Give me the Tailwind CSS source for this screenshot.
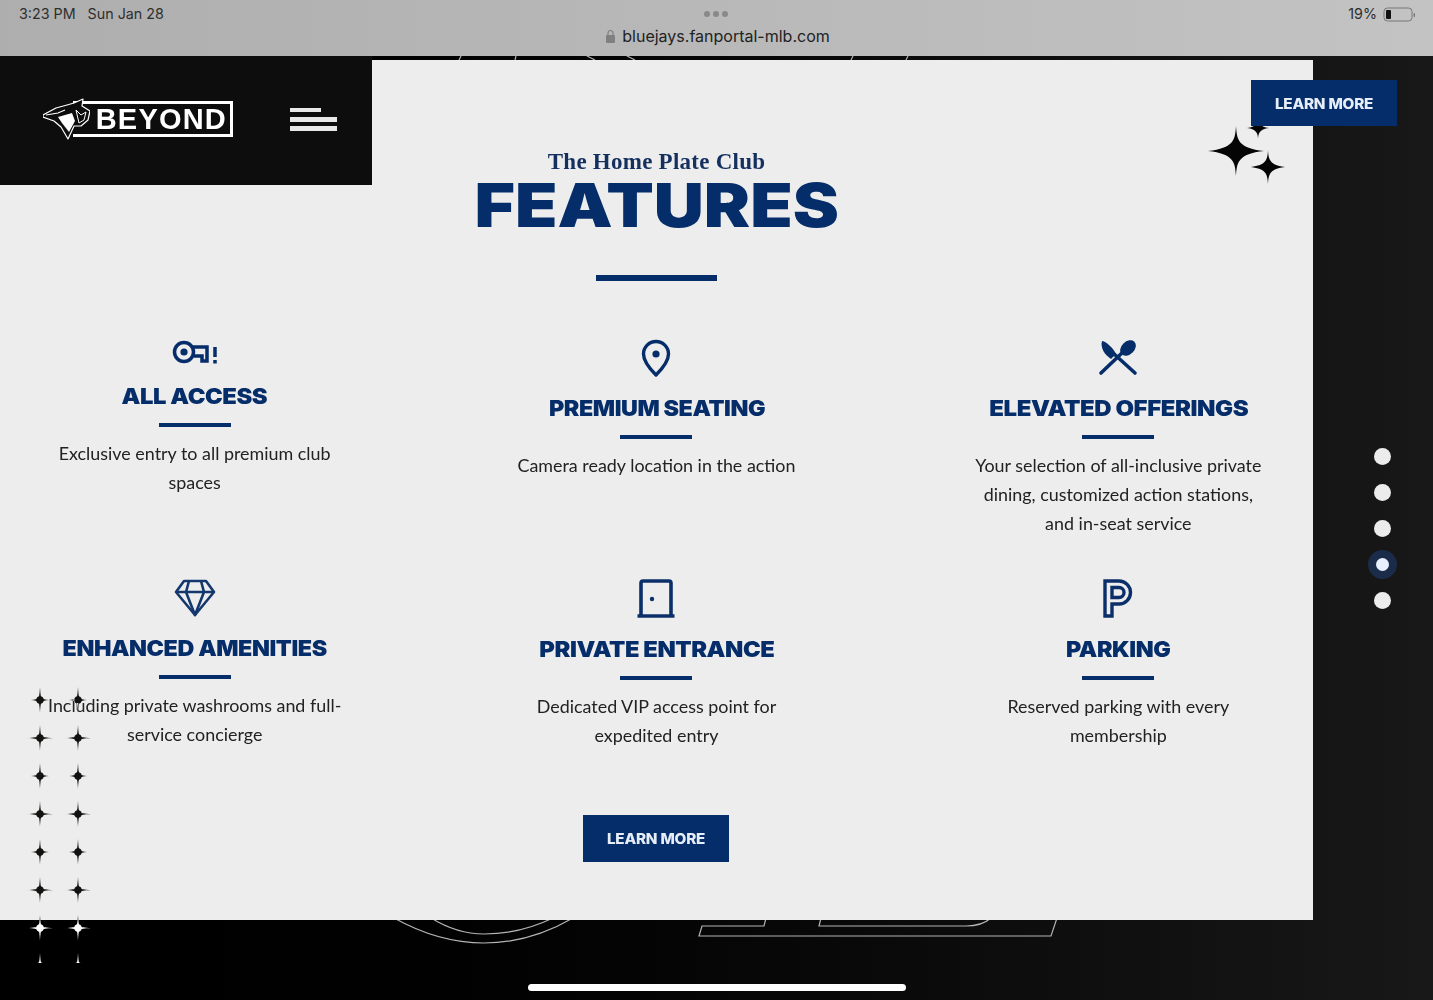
<!DOCTYPE html>
<html lang="en">
<head>
    <meta charset="UTF-8">
    <meta name="viewport" content="width=device-width, initial-scale=1.0">
    <title>The Home Plate Club Features</title>
    <script src="https://cdn.jsdelivr.net/npm/@tailwindcss/browser@4"></script>
</head>
<body class="bg-black">
    <div class="relative w-[1433px] h-[1000px] overflow-hidden bg-linear-to-r from-[#000000] via-[#060606] to-[#181818] font-['Inter',sans-serif]">

        <!-- Browser bar -->
        <header class="relative z-30 h-14 grid grid-cols-3 bg-linear-to-r from-[#aeaeae] to-[#c3c3c3] text-[#2e2e2e]">
            <div class="pl-[19px] pt-[5px] flex gap-[12px] text-[14.3px] leading-[18px] h-fit">
                <span>3:23 PM</span>
                <span>Sun Jan 28</span>
            </div>
            <div class="flex flex-col items-center pt-[11px]">
                <div class="flex gap-[3px] h-[6px]">
                    <span class="w-[6px] h-[6px] rounded-full bg-[#8a8a8a]"></span>
                    <span class="w-[6px] h-[6px] rounded-full bg-[#8a8a8a]"></span>
                    <span class="w-[6px] h-[6px] rounded-full bg-[#8a8a8a]"></span>
                </div>
                <div class="flex items-center gap-[7px] mt-[8px] ml-[3px] text-[16px] leading-[22px] text-[#222]">
                    <svg class="w-[9px] h-[14px]" viewBox="0 0 9 14"><path d="M2 6V4a2.500 2.500 0 0 1 5 0v2" fill="none" stroke="#808080" stroke-width="1.2"/><rect x="0" y="6" width="9" height="8" rx="1" fill="#808080"/></svg>
                    <span>bluejays.fanportal-mlb.com</span>
                </div>
            </div>
            <div class="flex justify-end gap-[6px] pr-[17px] pt-[5px] h-fit text-[14.3px] leading-[18px]">
                <span>19%</span>
                <svg class="w-[33px] h-[18px]" viewBox="0 0 33 18">
                    <rect x="1" y="3" width="28" height="13" rx="3.500" fill="none" stroke="#777" stroke-width="1"/>
                    <rect x="3" y="5" width="5" height="9" rx="1" fill="#111"/>
                    <rect x="30.500" y="8" width="1.500" height="4" rx="0.700" fill="#777"/>
                </svg>
            </div>
        </header>

        <!-- Outlined lettering behind the panel -->
        <svg class="absolute left-0 top-0 z-0" width="1433" height="1000" viewBox="0 0 1433 1000" fill="none" stroke="#b4b4b4" stroke-width="1.2">
            <path d="M394 918Q439 943 484 943Q530 943 573 918"/>
            <path d="M431 918Q457 934 484 934Q520 934 553 918"/>
            <path d="M766 918L764 926H702L699 936H1051L1057 918"/>
            <path d="M821 918L819 926H966Q982 926 991 918"/>
            <path d="M459 60L461 56M515 60L516 56M595 60L587 56M635 60L627 56M851 60L853 56M906 60L908 56"/>
        </svg>

        <main class="relative z-10 flex h-[944px]">
            <!-- Panel -->
            <section class="relative mt-1 w-[1313px] h-[860px] bg-[#ededee] flex flex-col items-center pt-[90px]">
                <p class="font-['Liberation_Serif',serif] font-bold text-[23px] leading-6 tracking-[0.25px] text-[#14305f]">The Home Plate Club</p>
                <h1 class="mt-[1px] h-[60px] font-black text-[60px] leading-[60px] text-[#052d69] scale-x-[1.156]">FEATURES</h1>
                <div class="mt-[40px] w-[121px] h-[6px] bg-[#052d69]"></div>

                <div class="mt-[58px] w-full grid grid-cols-3 gap-x-[72.5px] gap-y-[41px] h-[411px] grid-rows-[199px_171px]">
                    <!-- All access -->
                    <article class="flex flex-col items-center text-center">
                        <svg class="w-[48px] h-[26px]" viewBox="0 0 48 26" fill="none" stroke="#052d69" stroke-width="3.500">
                            <circle cx="13" cy="13" r="9.500"/>
                            <circle cx="13" cy="13" r="3.600" fill="#052d69" stroke="none"/>
                            <path d="M22 8H36V22H31V17H23"/>
                            <path d="M44 8V18M44 21V24.500"/>
                        </svg>
                        <h2 class="mt-[19px] h-6 font-black text-[22px] leading-6 tracking-[-0.4px] text-[#052d69] scale-x-[1.08] whitespace-nowrap">ALL ACCESS</h2>
                        <div class="mt-[15px] w-[72px] h-1 bg-[#052d69]"></div>
                        <p class="mt-3 w-[300px] font-['Lato',sans-serif] text-[17.9px] leading-[29px] text-[#222]">Exclusive entry to all premium club spaces</p>
                    </article>

                    <!-- Premium seating -->
                    <article class="flex flex-col items-center text-center">
                        <svg class="w-[30px] h-[38px]" viewBox="0 0 30 38" fill="none" stroke="#052d69" stroke-width="3.400">
                            <path d="M15 36C9 30 2.500 23 2.500 15A12.500 12.500 0 0 1 27.500 15C27.500 23 21 30 15 36Z" stroke-linejoin="round"/>
                            <circle cx="15" cy="15" r="3.600" fill="#052d69" stroke="none"/>
                        </svg>
                        <h2 class="mt-[19px] h-6 font-black text-[22px] leading-6 tracking-[-0.4px] text-[#052d69] scale-x-[1.06] whitespace-nowrap">PREMIUM SEATING</h2>
                        <div class="mt-[15px] w-[72px] h-1 bg-[#052d69]"></div>
                        <p class="mt-3 w-[300px] font-['Lato',sans-serif] text-[17.9px] leading-[29px] text-[#222]">Camera ready location in the action</p>
                    </article>

                    <!-- Elevated offerings -->
                    <article class="flex flex-col items-center text-center">
                        <svg class="w-[40px] h-[38px]" viewBox="0 0 40 38" fill="none" stroke="#052d69" stroke-width="3.600" stroke-linecap="round">
                            <path d="M3 34L25 13"/>
                            <ellipse cx="30" cy="9" rx="6.500" ry="9" transform="rotate(45 30 9)" fill="#052d69" stroke="none"/>
                            <path d="M37 34L15 14"/>
                            <path d="M4 2C9 3 15 9 18 15L13 20C7 16 2 9 4 2Z" fill="#052d69" stroke="none"/>
                        </svg>
                        <h2 class="mt-[19px] h-6 font-black text-[22px] leading-6 tracking-[-0.4px] text-[#052d69] scale-x-[1.09] whitespace-nowrap">ELEVATED OFFERINGS</h2>
                        <div class="mt-[15px] w-[72px] h-1 bg-[#052d69]"></div>
                        <p class="mt-3 w-[300px] font-['Lato',sans-serif] text-[17.9px] leading-[29px] text-[#222]">Your selection of all-inclusive private dining, customized action stations, and in-seat service</p>
                    </article>

                    <!-- Enhanced amenities -->
                    <article class="flex flex-col items-center text-center">
                        <svg class="w-[42px] h-[38px]" viewBox="0 0 42 38" fill="none" stroke="#14386e" stroke-width="2.600" stroke-linejoin="round">
                            <path d="M10 2H32L40 13L21 36L2 13Z"/>
                            <path d="M2 13H40M15 2L12 13L21 36L30 13L27 2"/>
                        </svg>
                        <h2 class="mt-[19px] h-6 font-black text-[22px] leading-6 tracking-[-0.4px] text-[#052d69] scale-x-[1.06] whitespace-nowrap">ENHANCED AMENITIES</h2>
                        <div class="mt-[15px] w-[72px] h-1 bg-[#052d69]"></div>
                        <p class="mt-3 w-[300px] font-['Lato',sans-serif] text-[17.9px] leading-[29px] text-[#222]">Including private washrooms and full-service concierge</p>
                    </article>

                    <!-- Private entrance -->
                    <article class="flex flex-col items-center text-center">
                        <svg class="w-[38px] h-[39px]" viewBox="0 0 38 39" fill="none" stroke="#0b2f68" stroke-width="3.600">
                            <path d="M4 36V4Q4 2 6 2H32Q34 2 34 4V36"/>
                            <path d="M0.500 37H37.500"/>
                            <circle cx="15" cy="20" r="2.200" fill="#0b2f68" stroke="none"/>
                        </svg>
                        <h2 class="mt-[19px] h-6 font-black text-[22px] leading-6 tracking-[-0.4px] text-[#052d69] scale-x-[1.08] whitespace-nowrap">PRIVATE ENTRANCE</h2>
                        <div class="mt-[15px] w-[72px] h-1 bg-[#052d69]"></div>
                        <p class="mt-3 w-[300px] font-['Lato',sans-serif] text-[17.9px] leading-[29px] text-[#222]">Dedicated VIP access point for expedited entry</p>
                    </article>

                    <!-- Parking -->
                    <article class="flex flex-col items-center text-center">
                        <svg class="w-[30px] h-[39px]" viewBox="0 0 30 39" fill="none" stroke="#0b2f68" stroke-width="3.400">
                            <path d="M2 37V2H16A11.500 11.500 0 0 1 16 25H9V37Z"/>
                            <path d="M9 18.500V8.500H16A5 5 0 0 1 16 18.500Z"/>
                        </svg>
                        <h2 class="mt-[19px] h-6 font-black text-[22px] leading-6 tracking-[-0.4px] text-[#052d69] scale-x-[1.06] whitespace-nowrap">PARKING</h2>
                        <div class="mt-[15px] w-[72px] h-1 bg-[#052d69]"></div>
                        <p class="mt-3 w-[300px] font-['Lato',sans-serif] text-[17.9px] leading-[29px] text-[#222]">Reserved parking with every membership</p>
                    </article>
                </div>

                <a class="mt-[65px] -ml-px w-[146px] h-[47px] flex items-center justify-center bg-[#052d69] text-[#e6edf8] text-[14px] font-extrabold tracking-[-0.2px]"><span class="scale-x-[1.09]">LEARN MORE</span></a>

                <!-- Logo block -->
                <div class="absolute left-0 -top-1 w-[372px] h-[129px] bg-[#0d0d0d] flex items-center pl-[43px]">
                    <svg class="w-[47px] h-[42px] -mr-[17px] relative z-10 mt-[-3px]" viewBox="0 0 47 42">
                        <path d="M0 17L13 10L24 7L31 5L40 1L39 8L47 13L45 22L38 28L31 28L25 41L18 29L11 23L0 19Z" fill="#0d0d0d" stroke="#fff" stroke-width="1.200" stroke-linejoin="round"/>
                        <path d="M15 19L29 15L32 23L26 34L19 25Z" fill="#fff"/>
                        <path d="M3 17L15 15L22 12" fill="none" stroke="#fff" stroke-width="1.200"/>
                        <path d="M33 12L38 17L43 14L41 22L36 25Z" fill="#0d0d0d" stroke="#fff" stroke-width="1"/>
                    </svg>
                    <div class="w-[160px] h-[36px] border-[3px] border-l-0 border-white flex items-center justify-end pr-[3px] font-['Liberation_Sans',sans-serif] font-bold text-[29px] leading-none tracking-[1.2px] text-white mt-[-3px]">BEYOND</div>
                    <div class="ml-[57px] mt-[-3px] flex flex-col gap-[4px] w-[47px]">
                        <span class="block w-[31px] h-[4px] mb-px bg-[#e8e8e8]"></span>
                        <span class="block w-[47px] h-[5px] bg-[#e8e8e8]"></span>
                        <span class="block w-[47px] h-[5px] bg-[#e8e8e8]"></span>
                    </div>
                </div>

                <!-- Sparkles by the top button -->
                <svg class="absolute left-[1200px] top-[50px]" width="90" height="90" viewBox="0 0 90 90" fill="#050505">
                    <path d="M58 6C58 12 59 17 69 18C59 19 58 24 58 30C58 24 57 19 47 18C57 17 58 12 58 6Z"/>
                    <path d="M36 16C37 30 38 38 64 41C38 44 37 52 36 66C35 52 34 44 8 41C34 38 35 30 36 16Z"/>
                    <path d="M68 40C68.500 50 70 55 85 57C70 59 68.500 64 68 74C67.500 64 66 59 51 57C66 55 67.500 50 68 40Z"/>
                </svg>

                <!-- Top button -->
                <a class="absolute left-[1251px] top-5 w-[146px] h-[46px] flex items-center justify-center bg-[#052d69] text-[#e6edf8] text-[14px] font-extrabold tracking-[-0.2px]"><span class="scale-x-[1.09]">LEARN MORE</span></a>
            </section>

            <!-- Section dots -->
            <nav class="ml-[60px] flex flex-col items-center justify-center gap-[19px] w-[18px]">
                <span class="w-[17px] h-[17px] rounded-full bg-[#ececec]"></span>
                <span class="w-[17px] h-[17px] rounded-full bg-[#ececec]"></span>
                <span class="w-[17px] h-[17px] rounded-full bg-[#ececec]"></span>
                <span class="w-[13px] h-[13px] my-[2px] rounded-full bg-[#e8f0ff] shadow-[0_0_0_8px_#1a2c4a]"></span>
                <span class="w-[17px] h-[17px] rounded-full bg-[#ececec]"></span>
            </nav>
        </main>

        <!-- Star column, inverts over panel and background -->
        <svg class="absolute left-[20px] top-[685px] z-20 mix-blend-difference" width="80" height="278" viewBox="0 0 80 278" fill="#fff">
            <defs>
                <g id="star-a">
                    <path d="M0 -13C.4 -6 .8 -3 1.800 -1.800C3 -.8 5 -.4 9 0C5 .4 3 .8 1.800 1.800C.8 3 .4 6 0 13C-.4 6 -.8 3 -1.800 1.800C-3 .8 -5 .4 -9 0C-5 -.4 -3 -.8 -1.800 -1.800C-.8 -3 -.4 -6 0 -13Z"/>
                    <circle r="3.700"/>
                </g>
                <g id="star-b">
                    <path d="M0 -13C.4 -6 .8 -3 1.800 -1.800C3 -.8 6 -.4 13 0C6 .4 3 .8 1.800 1.800C.8 3 .4 6 0 13C-.4 6 -.8 3 -1.800 1.800C-3 .8 -6 .4 -13 0C-6 -.4 -3 -.8 -1.800 -1.800C-.8 -3 -.4 -6 0 -13Z"/>
                    <circle r="3.700"/>
                </g>
            </defs>
            <use href="#star-a" x="20" y="15"/><use href="#star-a" x="58" y="15"/>
            <use href="#star-b" x="20" y="53"/><use href="#star-b" x="58" y="53"/>
            <use href="#star-a" x="20" y="91"/><use href="#star-a" x="58" y="91"/>
            <use href="#star-b" x="20" y="129"/><use href="#star-b" x="58" y="129"/>
            <use href="#star-a" x="20" y="167"/><use href="#star-a" x="58" y="167"/>
            <use href="#star-b" x="20" y="205"/><use href="#star-b" x="58" y="205"/>
            <use href="#star-b" x="20" y="243"/><use href="#star-b" x="58" y="243"/>
            <use href="#star-a" x="20" y="281"/><use href="#star-a" x="58" y="281"/>
        </svg>

        <!-- Home indicator -->
        <div class="absolute z-30 left-[528px] top-[984px] w-[378px] h-[7px] rounded-full bg-white"></div>
    </div>
</body>
</html>
